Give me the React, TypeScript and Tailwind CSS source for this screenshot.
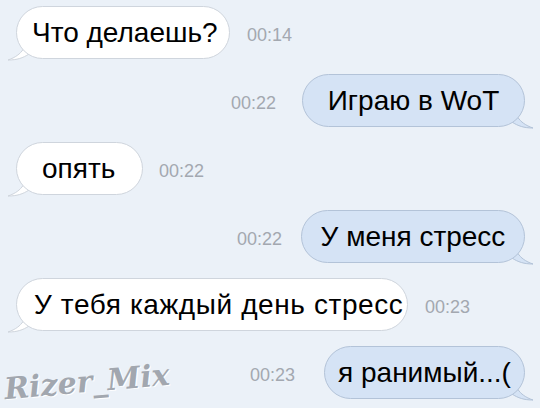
const font = "font-['Liberation_Sans','Helvetica_Neue',Arial,sans-serif]";

function Tail({ side, blue }: { side: "left" | "right"; blue?: boolean }) {
  const fill = blue ? "#d5e3f5" : "#ffffff";
  const stroke = blue ? "#b3c3d8" : "#cfd5dd";
  if (side === "left") {
    return (
      <svg className="absolute left-[-9px] bottom-[-2px]" width="24" height="26" viewBox="0 0 24 26">
        <path d="M20 0 C20 10 16 20 1 25 C10 25 16 23 22 19" fill={fill} stroke={stroke} strokeWidth="1" />
      </svg>
    );
  }
  return (
    <svg className="absolute right-[-9px] bottom-[-2px]" width="24" height="26" viewBox="0 0 24 26">
      <path d="M4 0 C4 10 8 20 23 25 C14 25 8 23 2 19" fill={fill} stroke={stroke} strokeWidth="1" />
    </svg>
  );
}

function Time({ t }: { t: string }) {
  return <span className={`${font} text-[18px] text-[#a3a8b0] pt-[6px]`}>{t}</span>;
}

function In({ text, time, gap, w, pad }: { text: string; time: string; gap: string; w: string; pad: string }) {
  return (
    <div className={`flex items-center pl-[16px] ${gap}`}>
      <div className="relative">
        <Tail side="left" />
        <div className={`relative h-[53px] flex items-center ${w} ${pad} rounded-[27px] bg-white border border-[#cfd5dd] ${font} text-[28px] text-black whitespace-nowrap`}>
          {text}
        </div>
      </div>
      <Time t={time} />
    </div>
  );
}

function Out({ text, time, gap, w }: { text: string; time: string; gap: string; w: string }) {
  return (
    <div className={`flex items-center justify-end pr-[15px] ${gap}`}>
      <Time t={time} />
      <div className="relative">
        <Tail side="right" blue />
        <div className={`relative h-[53px] flex items-center justify-center ${w} rounded-[27px] bg-[#d5e3f5] border border-[#b3c3d8] ${font} text-[28px] text-black whitespace-nowrap`}>
          {text}
        </div>
      </div>
    </div>
  );
}

export default function App() {
  return (
    <div className="relative w-[540px] h-[408px] overflow-hidden bg-[#ebf1f8] flex flex-col gap-[15px] pt-[6px]">
      <In text="Что делаешь?" time="00:14" gap="gap-[17px]" w="w-[214px]" pad="pl-[15px]" />
      <Out text="Играю в WoT" time="00:22" gap="gap-[26px]" w="w-[223px]" />
      <In text="опять" time="00:22" gap="gap-[16px]" w="w-[127px]" pad="pl-[25px]" />
      <Out text="У меня стресс" time="00:22" gap="gap-[19px]" w="w-[224px]" />
      <In text="У тебя каждый день стресс" time="00:23" gap="gap-[17px]" w="w-[392px]" pad="pl-[17px] tracking-[0.6px]" />
      <Out text="я ранимый...(" time="00:23" gap="gap-[29px]" w="w-[201px]" />
      <div className="absolute left-[4px] bottom-[4px] font-['DejaVu_Serif',serif] italic font-bold text-[30px] text-[#a2a7af] [text-shadow:1px_1px_0_#ffffff] -rotate-[5deg]">
        Rizer_Mix
      </div>
    </div>
  );
}
